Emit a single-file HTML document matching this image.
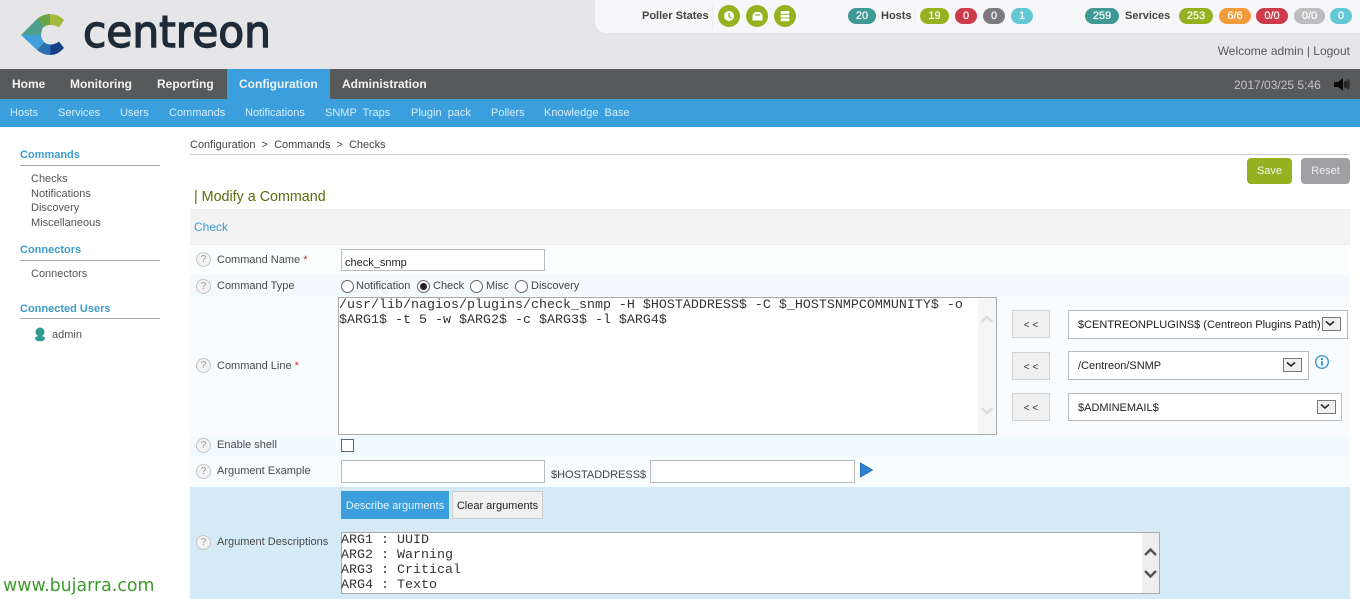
<!DOCTYPE html>
<html><head><meta charset="utf-8"><title>Centreon</title>
<style>
html,body{margin:0;padding:0;background:#fff}
#p{position:relative;width:1360px;height:599px;overflow:hidden;font-family:"Liberation Sans",sans-serif;font-size:11px;color:#444;background:#fff}
#p div,#p svg{position:absolute}
.t{white-space:pre;line-height:14px}
.nav{font-weight:bold;font-size:12px;color:#f2f2f2;top:77px}
.sub{color:#d8eefb;top:106px;font-size:11px}
.side{font-weight:bold;color:#3d9ccb;left:20px}
.ln{left:20px;width:140px;height:1px;background:#aaa}
.si{left:31px;color:#555}
.lab{left:217px;color:#4a4a4a}
.pill{height:16px;top:8px;border-radius:8px;color:#fff;text-align:center;line-height:16px;font-size:11px;text-shadow:0 0 .6px #fff}
.cir{width:22px;height:22px;top:5px;border-radius:50%;background:#96b11f}
.h{width:13px;height:13px;left:196px;border:1px solid #c4c4c4;border-radius:50%;background:#f2f2f2;color:#999;text-align:center;line-height:13px;font-size:10px}
.inp{background:#fff;border:1px solid #bbb;box-sizing:border-box}
.btn{left:1012px;width:38px;height:28px;background:#f0f0f0;border:1px solid #d2d2d2;box-sizing:border-box;text-align:center;line-height:29px;font-size:10px;color:#333}
.sel{background:#fff;border:1px solid #bbb;box-sizing:border-box;height:29px;left:1068px}
.sel .t{left:9px;top:7px;color:#222}
.ar{width:19px;height:14px;top:6px;background:#f0f0f0;border:1px solid #777;box-sizing:border-box}
.rad{width:11px;height:11px;top:280px;border:1px solid #666;border-radius:50%;background:#fff}
.mono{font-family:"Liberation Mono",monospace;font-size:13.33px;color:#333;white-space:pre}
</style></head><body><div id="p">
<div style="left:0;top:0;width:1360px;height:69px;background:#e6e6e8"></div>
<div style="left:595px;top:0;width:765px;height:33px;background:#f7f7f9;border-bottom-left-radius:11px"></div>

<svg style="left:20px;top:13px" width="46" height="44" viewBox="20 13 46 44">
<path d="M21 35 L38 18 L44 25 Q41.500 30 41 35 Z" fill="#4f9f8c"/>
<path d="M38 18 Q44 14 50 14 L50.500 25 Q46 25 43.500 27.500 Z" fill="#69a544"/>
<path d="M50 14 Q58 14 64 20 L59 27.500 Q55 25 50 25 Z" fill="#a4b93e"/>
<path d="M21 35 L41 35 Q41.500 39 44 42 L37 50 Z" fill="#3f9fd8"/>
<path d="M37 50 L44 42 Q47 44.500 50.500 44.500 L50.500 55 Q43 55 37 50 Z" fill="#2a70b2"/>
<path d="M50.500 44.500 Q55 44.500 59 41.500 L64 48 Q58 55 50.500 55 Z" fill="#153f86"/>
</svg>
<svg style="left:80px;top:10px" width="200" height="48"><text x="3" y="37" font-family="DejaVu Sans" font-size="44" fill="#1f2a38" stroke="#1f2a38" stroke-width="1.400" textLength="188" lengthAdjust="spacingAndGlyphs">centreon</text></svg>

<div class="t" style="left:642px;top:9px;font-weight:bold;color:#444">Poller States</div>
<div style="left:712px;top:4px;width:1px;height:25px;background:#eeeef0"></div>
<div class="cir" style="left:718px"></div><div class="cir" style="left:746px"></div><div class="cir" style="left:774px"></div>
<svg style="left:718px;top:6px" width="78" height="21">
<circle cx="11" cy="10" r="5" fill="#fff"/><path d="M11 7V10.500L13.500 12.500" stroke="#96b11f" stroke-width="1.300" fill="none"/>
<path d="M34.500 9L37 6H42L44.500 9V14.500H34.500Z" fill="#fff"/><path d="M37 9H42" stroke="#96b11f" stroke-width="1.200"/>
<rect x="62.500" y="5" width="9" height="2.800" rx="1.300" fill="#fff"/><rect x="62.500" y="8.700" width="9" height="2.800" rx="1.300" fill="#fff"/><rect x="62.500" y="12.400" width="9" height="2.800" rx="1.300" fill="#fff"/>
</svg>
<div class="pill" style="left:848px;width:28px;background:#3f9a96">20</div>
<div class="t" style="left:881px;top:9px;font-weight:bold;color:#444">Hosts</div>
<div style="left:914px;top:6px;width:1px;height:21px;background:#eeeef0"></div>
<div class="pill" style="left:920px;width:29px;background:#96b11f">19</div>
<div class="pill" style="left:955px;width:22px;background:#cc3b4b">0</div>
<div class="pill" style="left:983px;width:22px;background:#7b7b7f">0</div>
<div class="pill" style="left:1011px;width:22px;background:#63c8d6">1</div>
<div class="pill" style="left:1085px;width:34px;background:#3f9a96">259</div>
<div class="t" style="left:1125px;top:9px;font-weight:bold;color:#444">Services</div>
<div style="left:1173px;top:6px;width:1px;height:21px;background:#eeeef0"></div>
<div class="pill" style="left:1179px;width:34px;background:#96b11f">253</div>
<div class="pill" style="left:1219px;width:32px;background:#f19c38">6/6</div>
<div class="pill" style="left:1256px;width:32px;background:#cc3b4b">0/0</div>
<div class="pill" style="left:1294px;width:31px;background:#bdbdc0">0/0</div>
<div class="pill" style="left:1330px;width:22px;background:#63c8d6">0</div>
<div class="t" style="right:10px;top:44px;font-size:12px;color:#58595b">Welcome admin | Logout</div>

<div style="left:0;top:69px;width:1360px;height:30px;background:#58595b"></div>
<div style="left:227px;top:69px;width:103px;height:30px;background:#3a9fdc"></div>
<div class="t nav" style="left:12px">Home</div>
<div class="t nav" style="left:70px">Monitoring</div>
<div class="t nav" style="left:157px">Reporting</div>
<div class="t nav" style="left:239px">Configuration</div>
<div class="t nav" style="left:342px">Administration</div>
<div class="t" style="left:1234px;top:78px;font-size:12px;color:#c4c4c6">2017/03/25 5:46</div>
<svg style="left:1333px;top:77px" width="18" height="15"><path d="M1 5H5L10 1V14L5 10H1Z" fill="#0a0a0a"/><ellipse cx="12.500" cy="7.500" rx="1.700" ry="4" fill="#222"/><ellipse cx="15.300" cy="7.500" rx="1.500" ry="5.500" fill="#2c2c2e"/></svg>

<div style="left:0;top:99px;width:1360px;height:28px;background:#3a9fdc"></div>
<div class="t sub" style="left:10px">Hosts</div>
<div class="t sub" style="left:58px">Services</div>
<div class="t sub" style="left:120px">Users</div>
<div class="t sub" style="left:169px">Commands</div>
<div class="t sub" style="left:245px">Notifications</div>
<div class="t sub" style="left:325px">SNMP  Traps</div>
<div class="t sub" style="left:411px">Plugin  pack</div>
<div class="t sub" style="left:491px">Pollers</div>
<div class="t sub" style="left:544px">Knowledge  Base</div>

<div class="t side" style="top:148px">Commands</div><div class="ln" style="top:165px"></div>
<div class="t si" style="top:172px">Checks</div>
<div class="t si" style="top:187px">Notifications</div>
<div class="t si" style="top:201px">Discovery</div>
<div class="t si" style="top:216px">Miscellaneous</div>
<div class="t side" style="top:243px">Connectors</div><div class="ln" style="top:260px"></div>
<div class="t si" style="top:267px">Connectors</div>
<div class="t side" style="top:302px">Connected Users</div><div class="ln" style="top:318px"></div>
<svg style="left:34px;top:327px" width="12" height="15"><circle cx="6" cy="5" r="4.500" fill="#2f9a8f"/><ellipse cx="6" cy="11.500" rx="5" ry="2.800" fill="#2f9a8f"/></svg>
<div class="t si" style="left:52px;top:328px">admin</div>

<div class="t" style="left:190px;top:138px;color:#444">Configuration  &gt;  Commands  &gt;  Checks</div>
<div style="left:190px;top:154px;width:1160px;height:1px;background:#ccc"></div>
<div style="left:1247px;top:158px;width:45px;height:26px;background:#96b11f;border-radius:4px;color:#f4f4f4;text-align:center;line-height:26px">Save</div>
<div style="left:1301px;top:158px;width:49px;height:26px;background:#a0a0a4;border-radius:4px;color:#eee;text-align:center;line-height:26px">Reset</div>
<div class="t" style="left:194px;top:190px;font-size:14.300px;color:#5b6b0c">| Modify a Command</div>

<div style="left:190px;top:209px;width:1160px;height:36px;background:#f3f3f3;border-top:1px solid #ececec;border-bottom:1px solid #ececec;box-sizing:border-box"></div>
<div class="t" style="left:194px;top:220px;font-size:12px;color:#3d9ccb">Check</div>
<div style="left:190px;top:245px;width:1160px;height:30px;background:#fbfeff"></div>
<div style="left:190px;top:275px;width:1160px;height:21px;background:#f2fafe"></div>
<div style="left:190px;top:296px;width:1160px;height:140px;background:#f8fcff"></div>
<div style="left:190px;top:436px;width:1160px;height:20px;background:#f1fafe"></div>
<div style="left:190px;top:456px;width:1160px;height:31px;background:#f7fcff"></div>
<div style="left:190px;top:487px;width:1160px;height:112px;background:#d4ebf7"></div>

<div class="h" style="top:252px">?</div><div class="t lab" style="top:253px">Command Name <span style="color:#c33">*</span></div>
<div class="h" style="top:279px">?</div><div class="t lab" style="top:279px">Command Type</div>
<div class="h" style="top:358px">?</div><div class="t lab" style="top:359px">Command Line <span style="color:#c33">*</span></div>
<div class="h" style="top:438px">?</div><div class="t lab" style="top:438px">Enable shell</div>
<div class="h" style="top:464px">?</div><div class="t lab" style="top:464px">Argument Example</div>
<div class="h" style="top:535px">?</div><div class="t lab" style="top:535px">Argument Descriptions</div>

<div class="inp" style="left:341px;top:249px;width:204px;height:22px"></div>
<div class="t" style="left:345px;top:256px;color:#222">check_snmp</div>

<div class="rad" style="left:341px"></div><div class="t" style="left:356px;top:279px">Notification</div>
<div class="rad" style="left:417px"></div><div style="left:420px;top:283px;width:7px;height:7px;border-radius:50%;background:#222"></div><div class="t" style="left:433px;top:279px">Check</div>
<div class="rad" style="left:470px"></div><div class="t" style="left:486px;top:279px">Misc</div>
<div class="rad" style="left:515px"></div><div class="t" style="left:531px;top:279px">Discovery</div>

<div style="left:338px;top:297px;width:659px;height:138px;background:#fff;border:1px solid #aaa;box-sizing:border-box"></div>
<div style="left:978px;top:298px;width:18px;height:136px;background:#f6f6f6"></div>
<svg style="left:978px;top:298px" width="18" height="136"><path d="M3.500 24L9 19L14.500 24M3.500 110L9 115L14.500 110" stroke="#ddd" stroke-width="2.500" fill="none"/></svg>
<div class="mono" style="left:339px;top:298px;line-height:15px">/usr/lib/nagios/plugins/check_snmp -H $HOSTADDRESS$ -C $_HOSTSNMPCOMMUNITY$ -o
$ARG1$ -t 5 -w $ARG2$ -c $ARG3$ -l $ARG4$</div>

<div class="btn" style="top:310px">&lt; &lt;</div>
<div class="btn" style="top:352px">&lt; &lt;</div>
<div class="btn" style="top:393px">&lt; &lt;</div>
<div class="sel" style="top:310px;width:280px"><div class="t">$CENTREONPLUGINS$ (Centreon Plugins Path)</div><div class="ar" style="left:253px"></div></div>
<div class="sel" style="top:351px;width:241px"><div class="t">/Centreon/SNMP</div><div class="ar" style="left:214px"></div></div>
<div class="sel" style="top:393px;width:274px;height:28px"><div class="t">$ADMINEMAIL$</div><div class="ar" style="left:248px"></div></div>
<svg style="left:1068px;top:310px" width="280" height="112"><path d="M258 11.500L262 15L266 11.500M219 52.500L223 56L227 52.500M253 94.500L257 98L261 94.500" stroke="#222" stroke-width="1.500" fill="none"/></svg>
<svg style="left:1314px;top:354px" width="16" height="16"><circle cx="8" cy="8" r="6.300" fill="#f4fbff" stroke="#3a9bd0" stroke-width="1.400"/><rect x="7" y="7" width="2" height="4.500" fill="#3a9bd0"/><rect x="7" y="4" width="2" height="2" fill="#3a9bd0"/></svg>

<div style="left:341px;top:439px;width:13px;height:13px;background:#fff;border:1px solid #666;box-sizing:border-box"></div>
<div class="inp" style="left:341px;top:460px;width:204px;height:23px"></div>
<div class="t" style="left:551px;top:468px">$HOSTADDRESS$</div>
<div class="inp" style="left:650px;top:460px;width:205px;height:23px"></div>
<svg style="left:859px;top:462px" width="15" height="16"><path d="M1.500 1L13.500 8L1.500 15Z" fill="#2f7fd0" stroke="#2a6cb4" stroke-linejoin="round"/></svg>

<div style="left:341px;top:491px;width:108px;height:28px;background:#3a9fdc;color:#e8f5fd;text-align:center;line-height:30px">Describe arguments</div>
<div style="left:452px;top:491px;width:91px;height:28px;background:#f0f0f0;border:1px solid #ccc;box-sizing:border-box;color:#222;text-align:center;line-height:28px">Clear arguments</div>

<div style="left:341px;top:532px;width:819px;height:62px;background:#fff;border:1px solid #aaa;box-sizing:border-box"></div>
<div style="left:1142px;top:533px;width:17px;height:60px;background:#eee"></div>
<svg style="left:1142px;top:533px" width="17" height="60"><path d="M3 22L8.500 16.500L14 22M3 38L8.500 43.500L14 38" stroke="#555" stroke-width="2.500" fill="none"/></svg>
<div class="mono" style="left:341px;top:533px;line-height:15px">ARG1 : UUID
ARG2 : Warning
ARG3 : Critical
ARG4 : Texto</div>

<div class="t" style="left:3px;top:576px;font-family:'DejaVu Sans',sans-serif;font-size:17.400px;line-height:20px;color:#3d9a2c">www.bujarra.com</div>
</div></body></html>
